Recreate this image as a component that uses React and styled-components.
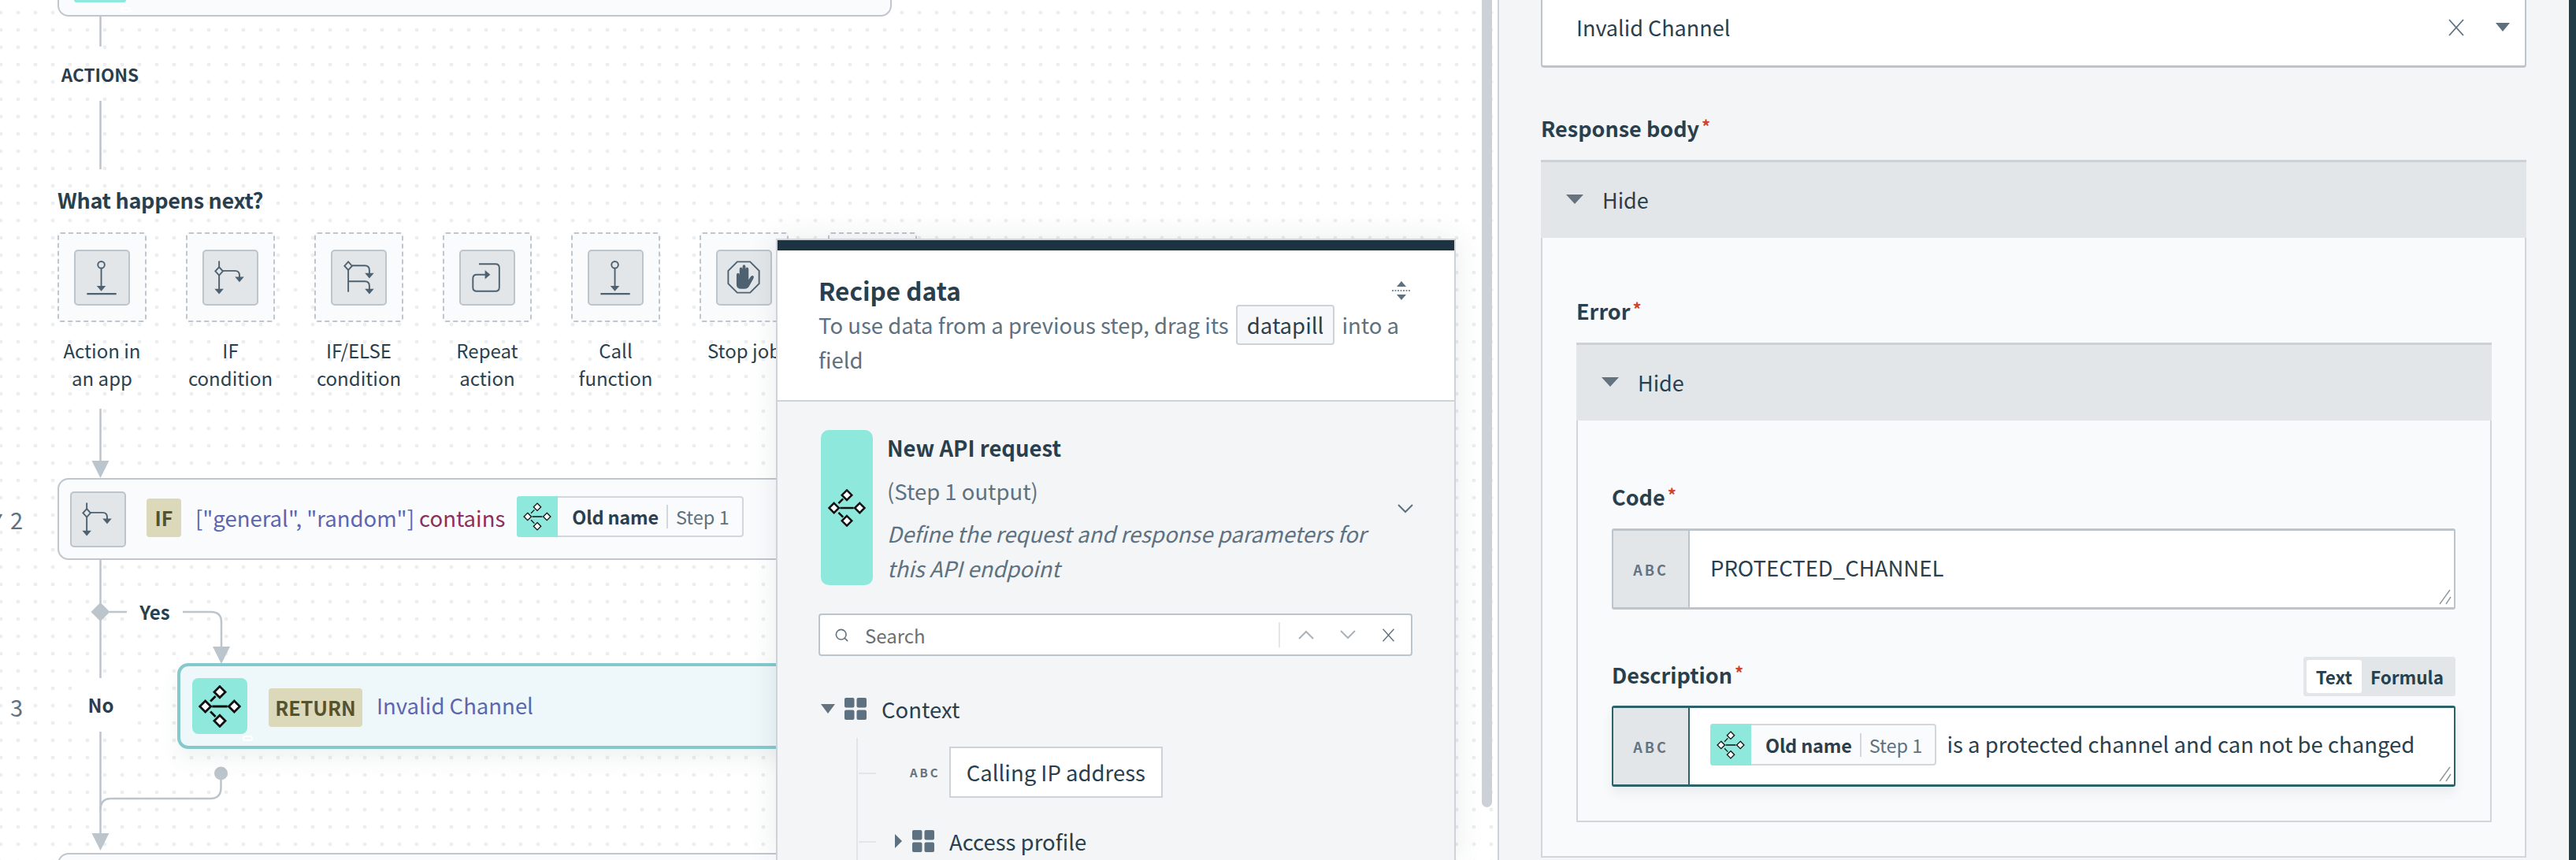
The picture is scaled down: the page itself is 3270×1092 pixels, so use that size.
import React from 'react'
import styled, { createGlobalStyle } from 'styled-components'
import { Search } from 'lucide-react'

const GlobalStyle = createGlobalStyle`
  html, body {
    margin: 0;
    padding: 0;
    background: #fff;
    overflow: hidden;
  }
  * {
    box-sizing: border-box;
  }
  body {
    font-family: "Noto Sans CJK SC", "Open Sans", sans-serif;
    color: #2a3f4d;
  }
`

const Page = styled.div`
  width: 3270px;
  height: 1092px;
  display: flex;
  overflow: hidden;
`

/* left side: the recipe canvas */
const Canvas = styled.div`
  position: relative;
  width: 1901px;
  height: 1092px;
  flex: none;
  overflow: hidden;
  background-color: #fff;
  background-image: radial-gradient(circle, #eceef0 2.2px, transparent 2.7px);
  background-size: 22px 22px;
  background-position: -10px 5px;
`

const Wires = styled.svg`
  position: absolute;
  left: 0;
  top: 0;
`

const Flow = styled.div`
  position: relative;
  display: flex;
  flex-direction: column;
  padding-left: 73px;
`

const Port = styled.span`
  position: absolute;
  width: 13px;
  height: 7px;
  border: 2px solid #fff;
  border-radius: 4px;
`

const TopCard = styled.div`
  position: relative;
  width: 1059px;
  height: 21px;
  background: #fafbfd;
  border: 2px solid #bfc6ce;
  border-top: none;
  border-radius: 0 0 14px 14px;
  padding-left: 19px;
  ${Port} {
    left: 78px;
    top: 9px;
  }
`

const TopChip = styled.div`
  width: 66px;
  height: 3px;
  background: #8ee8dc;
  border-radius: 0 0 6px 6px;
`

const ActionsLabel = styled.div`
  width: 108px;
  margin-top: 58px;
  font-size: 22.5px;
  line-height: 30px;
  font-weight: 600;
  text-align: center;
`

const NextTitle = styled.div`
  margin-top: 130px;
  font-size: 27px;
  line-height: 30px;
  font-weight: 700;
  letter-spacing: -0.3px;
`

const TileRow = styled.div`
  display: flex;
  gap: 50px;
  margin-top: 26px;
  height: 202px;
`

const TileColumn = styled.div`
  width: 113px;
  flex: none;
  display: flex;
  flex-direction: column;
  align-items: center;
`

const Tile = styled.div`
  width: 113px;
  height: 114px;
  display: flex;
  align-items: center;
  justify-content: center;
  background: #fafbfd;
  border: 2px dashed #bfc6ce;
  border-radius: 4px;
`

const IconBox = styled.div`
  width: 71px;
  height: 71px;
  flex: none;
  background: #e3e6e9;
  border: 2px solid #bcc4cc;
  border-radius: 5px;
  display: flex;
  align-items: center;
  justify-content: center;
`

const TileLabel = styled.div`
  width: 140px;
  margin-top: 18px;
  font-size: 24px;
  line-height: 35px;
  text-align: center;
  white-space: pre-line;
`

const StepRow = styled.div`
  display: flex;
  align-items: center;
  margin-left: -73px;
  margin-top: ${({ $top }) => $top}px;
`

const StepNumber = styled.div`
  position: relative;
  width: ${({ $width }) => $width}px;
  flex: none;
  padding-left: 13px;
  font-size: 29px;
  line-height: 36px;
  color: #5e7180;
`

/* sliver of the step menu caret that sticks in from the window edge */
const StepCaret = styled.span`
  position: absolute;
  left: 0;
  top: 12px;
  width: 3px;
  height: 6px;
  background: #5e7180;
  clip-path: polygon(0 0, 100% 0, 0 100%);
`

const IfCard = styled.div`
  width: 1060px;
  height: 104px;
  display: flex;
  align-items: center;
  padding-left: 14px;
  background: #fafbfd;
  border: 2px solid #bfc6ce;
  border-radius: 14px;
`

const Tag = styled.div`
  height: 49px;
  width: ${({ $width }) => $width}px;
  margin-left: ${({ $left }) => $left}px;
  margin-top: ${({ $shift }) => $shift}px;
  flex: none;
  background: #dcd9bb;
  color: #55532d;
  border-radius: 4px;
  font-size: 25px;
  line-height: 49px;
  font-weight: 700;
  text-align: center;
`

const ValueText = styled.span`
  margin-left: 18px;
  margin-top: -4px;
  font-size: 27.5px;
  line-height: 40px;
  color: #5c66b0;
  white-space: pre;
`

const KeywordText = styled.span`
  color: #8d2f5c;
`

const Pill = styled.div`
  height: ${({ $height }) => $height}px;
  flex: none;
  display: flex;
  align-items: center;
  margin-left: ${({ $left }) => $left}px;
  margin-top: ${({ $shift }) => $shift || 0}px;
  background: #fafbfd;
  border: 2px solid #d2d7dc;
  border-radius: 4px;
`

const PillIcon = styled.div`
  width: ${({ $width }) => $width}px;
  align-self: stretch;
  margin: -2px 0 -2px -2px;
  background: #8ee8dc;
  border-radius: 4px 0 0 4px;
  display: flex;
  align-items: center;
  justify-content: center;
`

const PillName = styled.span`
  margin-left: ${({ $left }) => $left}px;
  font-size: 23.5px;
  line-height: 30px;
  font-weight: 700;
  letter-spacing: -0.2px;
`

const PillStep = styled.span`
  margin-left: 10px;
  padding-left: 10px;
  padding-right: 16px;
  border-left: 2px solid #d2d7dc;
  font-size: 23.5px;
  line-height: 30px;
  color: #5e7180;
`

const ReturnCard = styled.div`
  position: relative;
  width: 1000px;
  height: 109px;
  display: flex;
  align-items: center;
  padding-left: 15px;
  background: #eef7f9;
  border: 4px solid #85c9cc;
  border-radius: 14px;
  box-shadow: 0 14px 26px rgba(60, 80, 90, 0.07);
  ${Port} {
    left: 79px;
    bottom: 6px;
  }
`

const FlowIconBox = styled.div`
  width: 70px;
  height: 71px;
  flex: none;
  background: #8ee8dc;
  border-radius: 8px;
  display: flex;
  align-items: center;
  justify-content: center;
`

const BottomCard = styled.div`
  width: 1060px;
  height: 30px;
  margin-top: 132px;
  background: #fafbfd;
  border: 2px solid #bfc6ce;
  border-radius: 14px 14px 0 0;
`

const BranchLabel = styled.div`
  position: absolute;
  background: #fff;
  font-weight: 700;
  font-size: 24px;
  text-align: center;
`

const YesLabel = styled(BranchLabel)`
  left: 161px;
  top: 761px;
  width: 71px;
  height: 32px;
  line-height: 32px;
`

const NoLabel = styled(BranchLabel)`
  left: 98px;
  top: 861px;
  width: 60px;
  height: 68px;
  line-height: 68px;
`

const Scrollbar = styled.div`
  position: absolute;
  left: 1881px;
  top: 0;
  width: 13px;
  height: 1025px;
  background: #ccd1d8;
  border-radius: 0 0 7px 7px;
`

/* floating recipe data panel */
const DataPanel = styled.div`
  position: absolute;
  left: 985px;
  top: 303px;
  width: 863px;
  height: 789px;
  background: #f3f5f7;
  border: 2px solid #ced3d9;
  border-bottom: none;
  box-shadow: 0 0 34px rgba(40, 55, 65, 0.1);
  overflow: hidden;
`

const PanelBar = styled.div`
  height: 13px;
  background: #1e3341;
`

const PanelHeader = styled.div`
  height: 192px;
  background: #fff;
  border-bottom: 2px solid #ced3d9;
  padding: 29px 54px 0 52px;
`

const TitleRow = styled.div`
  display: flex;
  justify-content: space-between;
  align-items: center;
`

const PanelTitle = styled.div`
  font-size: 31.5px;
  line-height: 43px;
  font-weight: 700;
`

const PanelDesc = styled.div`
  font-size: 27.5px;
  line-height: 44px;
  color: #5e7180;
`

const Chip = styled.span`
  display: inline-block;
  margin: -6px 3px -6px 3px;
  padding: 0 12px;
  line-height: 47px;
  color: #2a3f4d;
  background: #f6f7f9;
  border: 2px solid #ced3d9;
  border-radius: 4px;
`

const PanelBody = styled.div`
  padding: 36px 53px 0 52px;
`

const StepSummary = styled.div`
  display: flex;
  align-items: center;
  height: 197px;
`

const StepBlock = styled.div`
  width: 66px;
  align-self: stretch;
  margin-left: 3px;
  flex: none;
  background: #8ee8dc;
  border-radius: 10px;
  display: flex;
  align-items: center;
  justify-content: center;
`

const StepText = styled.div`
  flex: 1;
  margin-left: 18px;
  align-self: flex-start;
  font-size: 27.5px;
`

const StepName = styled.div`
  font-weight: 700;
  line-height: 44px;
`

const StepOutput = styled.div`
  margin-top: 11px;
  line-height: 44px;
  color: #5e7180;
`

const StepHint = styled.div`
  margin-top: 10px;
  line-height: 44px;
  color: #5e7180;
  font-style: italic;
  width: 640px;
`

const StepChevron = styled.svg`
  margin-right: -1px;
  margin-top: 2px;
`

const SearchBox = styled.div`
  margin-top: 36px;
  height: 54px;
  display: flex;
  align-items: center;
  background: #fff;
  border: 2px solid #bcc4cc;
  border-radius: 4px;
  padding-left: 18px;
  color: #5e7180;
`

const SearchText = styled.span`
  flex: 1;
  margin-left: 20px;
  font-size: 24px;
  color: #6b6f73;
`

const SearchTools = styled.div`
  height: 32px;
  width: 168px;
  display: flex;
  align-items: center;
  justify-content: space-around;
  padding: 0 4px 0 6px;
  border-left: 2px solid #e3e6e9;
`

const Tree = styled.div`
  position: relative;
  margin-top: 53px;
  padding-left: 3px;
`

const TreeRail = styled.div`
  position: absolute;
  left: 48px;
  top: 51px;
  width: 2px;
  height: 200px;
  background: #e3e6e9;
`

const TreeRow = styled.div`
  position: relative;
  display: flex;
  align-items: center;
  height: ${({ $height }) => $height}px;
  margin-top: ${({ $top }) => $top || 0}px;
  padding-left: ${({ $indent }) => $indent}px;
  font-size: 27.5px;
`

const TreeTick = styled.span`
  position: absolute;
  left: 48px;
  top: 50%;
  width: 22px;
  height: 2px;
  background: #e3e6e9;
`

const TreeName = styled.span`
  display: flex;
  margin-left: ${({ $left }) => $left}px;
`

const TreeCaret = styled.span`
  width: 0;
  height: 0;
  margin-right: 12px;
  border-left: 9px solid transparent;
  border-right: 9px solid transparent;
  border-top: 12px solid #64737f;
`

const FieldChip = styled.div`
  margin-left: 11px;
  height: 65px;
  padding: 0 20px;
  line-height: 60px;
  background: #fff;
  border: 2px solid #ced3d9;
`

const AbcMark = styled.span`
  font-size: ${({ $size }) => $size}px;
  font-weight: 700;
  letter-spacing: 3px;
  color: #64737f;
`

/* right side: the form */
const FormPanel = styled.div`
  flex: 1;
  height: 1092px;
  background: #f3f5f7;
  border-left: 2px solid #ced3d9;
  padding: 0 54px 0 53px;
  overflow: hidden;
`

const EdgeStrip = styled.div`
  width: 9px;
  height: 1092px;
  flex: none;
  background: #1e3d49;
`

const SelectBox = styled.div`
  height: 86px;
  display: flex;
  align-items: center;
  padding: 0 19px 14px 43px;
  background: #fff;
  border: 2px solid #bcc4cc;
  border-top: none;
  border-bottom-width: 3px;
  border-radius: 0 0 4px 4px;
  font-size: 27px;
  color: #2a3f4d;
`

const SelectValue = styled.span`
  flex: 1;
`

const SelectArrow = styled.span`
  margin-left: 39px;
  width: 0;
  height: 0;
  border-left: 9px solid transparent;
  border-right: 9px solid transparent;
  border-top: 11px solid #5e7180;
`

const FieldLabel = styled.div`
  margin-top: ${({ $top }) => $top}px;
  font-size: 27px;
  line-height: 30px;
  font-weight: 600;
  color: #293f4c;
`

const Required = styled.span`
  margin-left: 3px;
  font-size: 22px;
  line-height: 20px;
  vertical-align: 5px;
  color: #d0432b;
`

const Accordion = styled.div`
  margin-top: 25px;
  border-left: 2px solid #d2d6db;
  border-right: 2px solid #d2d6db;
  border-bottom: 2px solid #d2d6db;
  background: #f9fafc;
`

const AccordionHead = styled.div`
  height: 99px;
  display: flex;
  align-items: center;
  padding: 0 0 2px 32px;
  background: #e3e6e9;
  border-top: 3px solid #ccd1d6;
  margin: 0 -2px;
  font-size: 27px;
`

const HeadArrow = styled.span`
  width: 0;
  height: 0;
  margin-right: 24px;
  border-left: 11px solid transparent;
  border-right: 11px solid transparent;
  border-top: 12px solid #64737f;
`

const AccordionBody = styled.div`
  padding: ${({ $top }) => $top}px ${({ $right }) => $right}px 43px 43px;
`

const LabelRow = styled.div`
  margin-top: 60px;
  height: 50px;
  display: flex;
  align-items: flex-start;
  justify-content: space-between;
`

const Toggle = styled.div`
  height: 50px;
  display: flex;
  align-items: center;
  padding: 0 4px;
  background: #e3e6e9;
  border-radius: 3px;
  font-size: 22.5px;
  font-weight: 600;
`

const ToggleOption = styled.div`
  height: 42px;
  line-height: 42px;
  padding: 0 ${({ $active }) => ($active ? 12 : 11)}px;
  border-radius: 3px;
  background: ${({ $active }) => ($active ? '#fff' : 'transparent')};
`

const TextField = styled.div`
  position: relative;
  display: flex;
  height: 103px;
  margin-top: ${({ $top }) => $top}px;
  background: #fff;
  border: 2px solid ${({ $focus }) => ($focus ? '#2c6268' : '#bcc4cc')};
  border-top-width: 3px;
  border-bottom-width: 3px;
  border-radius: 3px;
  box-shadow: ${({ $focus }) => ($focus ? '0 8px 14px rgba(50, 70, 80, 0.08)' : 'none')};
`

const AbcCell = styled.div`
  width: 97px;
  flex: none;
  display: flex;
  align-items: center;
  justify-content: center;
  background: #e3e6e9;
  border-right: 2px solid ${({ $focus }) => ($focus ? '#2c6268' : '#bcc4cc')};
`

const FieldValue = styled.div`
  flex: 1;
  display: flex;
  align-items: flex-start;
  padding: ${({ $top }) => $top}px 0 0 26px;
  font-size: 27.5px;
  line-height: 40px;
  white-space: nowrap;
`

const ResizeGrip = styled.svg`
  position: absolute;
  right: 3px;
  bottom: 3px;
`

const AfterPill = styled.span`
  margin-left: 13px;
  margin-top: 5px;
`

const ic = '#4d6170'

function ActionIcon() {
  return (
    <svg width="67" height="67" viewBox="0 0 70 70" fill="none" stroke={ic} strokeWidth="2">
      <circle cx="34" cy="18" r="4.5" />
      <path d="M34 23V48" />
      <path d="M28 46H40L34 53Z" fill={ic} stroke="none" />
      <path d="M15 56.5H54" strokeWidth="2.4" />
    </svg>
  )
}

function IfIcon() {
  return (
    <svg width="67" height="67" viewBox="0 0 70 70" fill="none" stroke={ic} strokeWidth="2">
      <path d="M20 13V52" />
      <path d="M20 21L25 26.500L20 32L15 26.500Z" fill="#e3e6e9" />
      <path d="M25 26H41Q47 26 47 32V36" />
      <path d="M41 34H53L47 41Z" fill={ic} stroke="none" />
      <path d="M14 50H26L20 57Z" fill={ic} stroke="none" />
    </svg>
  )
}

function IfElseIcon() {
  return (
    <svg width="67" height="67" viewBox="0 0 70 70" fill="none" stroke={ic} strokeWidth="2">
      <path d="M21 20V54" />
      <path d="M21 14L26 19.500L21 25L16 19.500Z" fill="#e3e6e9" />
      <path d="M26 19H43Q49 19 49 25V30" />
      <path d="M21 40H43Q49 40 49 46V51" />
      <path d="M43 29H55L49 36Z" fill={ic} stroke="none" />
      <path d="M43 50H55L49 57Z" fill={ic} stroke="none" />
    </svg>
  )
}

function RepeatIcon() {
  return (
    <svg width="67" height="67" viewBox="0 0 70 70" fill="none" stroke={ic} strokeWidth="2">
      <path d="M24 17H46Q51 17 51 22V48Q51 53 46 53H21Q16 53 16 48V36Q16 31 21 31H33" />
      <path d="M32 25L39 31L32 37Z" fill={ic} stroke="none" />
    </svg>
  )
}

function StopIcon() {
  return (
    <svg width="67" height="67" viewBox="0 0 70 70" fill="none" stroke={ic} strokeWidth="2">
      <path d="M26 14H43L55 26V43L43 55H26L14 43V26Z" />
      <path
        d="M25 32Q25 29 27 29Q29 29 29 32V24Q29 21.500 31 21.500Q33 21.500 33 24V20.500Q33 18 35 18Q37 18 37 20.500V24Q37 21.500 39 21.500Q41 21.500 41 24V38L44 33.500Q46 31.500 47.500 33Q48.500 34 47.500 36L42 46Q40 50 36 50H31Q25 50 25 44Z"
        fill={ic}
        stroke="none"
      />
    </svg>
  )
}

function FlowIcon({ size, weight = 2.6 }) {
  const diamond = (x, y) => `M${x} ${y - 6.500}L${x + 6.500} ${y}L${x} ${y + 6.500}L${x - 6.500} ${y}Z`
  return (
    <svg width={size} height={size} viewBox="0 0 50 50" fill="#fff" stroke="#111" strokeWidth={weight}>
      <path d={diamond(8, 25)} />
      <path d={diamond(42, 25)} />
      <path d={diamond(25, 8)} />
      <path d={diamond(25, 42)} />
      <path d="M16 25H34M14 19L20 13M14 31L20 37" fill="none" />
    </svg>
  )
}

function ThinX({ size, color }) {
  return (
    <svg width={size} height={size} viewBox="0 0 22 22" fill="none" stroke={color} strokeWidth="1.800">
      <path d="M2 1L20 21M20 1L2 21" />
    </svg>
  )
}

function Chevron({ up, color }) {
  return (
    <svg width="20" height="12" viewBox="0 0 20 12" fill="none" stroke={color} strokeWidth="2">
      <path d={up ? 'M1 11L10 2L19 11' : 'M1 1L10 10L19 1'} />
    </svg>
  )
}

function Connectors() {
  const line = '#bcc4cc'
  const arrow = (x, tip) => `M${x - 11} ${tip - 22}H${x + 11}L${x} ${tip}Z`
  return (
    <Wires width="1901" height="1092" fill="none" stroke={line} strokeWidth="2.500">
      <path d="M127.500 21V59M127.500 128V215M127.500 519V590" />
      <path d={arrow(127.5, 607)} fill={line} stroke="none" />
      <path d="M127.500 711V861M127.500 929V1062" />
      <path d="M127.500 765L139.500 777L127.500 789L115.500 777Z" fill={line} stroke="none" />
      <path d="M139 777H162M232 777H268Q281 777 281 790V825" />
      <path d={arrow(281, 843)} fill={line} stroke="none" />
      <circle cx="280.500" cy="982" r="8.500" fill={line} stroke="none" />
      <path d="M280.500 982V1000Q280.500 1014 267 1014H141Q127.500 1014 127.500 1028" />
      <path d={arrow(127.5, 1080)} fill={line} stroke="none" />
    </Wires>
  )
}

const tiles = [
  { label: 'Action in\nan app', icon: <ActionIcon /> },
  { label: 'IF\ncondition', icon: <IfIcon /> },
  { label: 'IF/ELSE\ncondition', icon: <IfElseIcon /> },
  { label: 'Repeat\naction', icon: <RepeatIcon /> },
  { label: 'Call\nfunction', icon: <ActionIcon /> },
  { label: 'Stop job', icon: <StopIcon /> },
  { label: '', icon: null },
]

function RecipeCanvas() {
  return (
    <Canvas>
      <Connectors />
      <Flow>
        <TopCard>
          <TopChip />
          <Port />
        </TopCard>
        <ActionsLabel>ACTIONS</ActionsLabel>
        <NextTitle>What happens next?</NextTitle>
        <TileRow>
          {tiles.map((t, i) => (
            <TileColumn key={i}>
              <Tile>{t.icon && <IconBox>{t.icon}</IconBox>}</Tile>
              <TileLabel>{t.label}</TileLabel>
            </TileColumn>
          ))}
        </TileRow>
        <StepRow $top={110}>
          <StepNumber $width={73}>
            <StepCaret />2
          </StepNumber>
          <IfCard>
            <IconBox>
              <IfIcon />
            </IconBox>
            <Tag $width={44} $left={26} $shift={-3}>IF</Tag>
            <ValueText>
              ["general", "random"] <KeywordText>contains</KeywordText>
            </ValueText>
            <Pill $height={52} $left={15} $shift={-6}>
              <PillIcon $width={52}>
                <FlowIcon size={36} weight={1.8} />
              </PillIcon>
              <PillName $left={18}>Old name</PillName>
              <PillStep>Step 1</PillStep>
            </Pill>
          </IfCard>
        </StepRow>
        <StepRow $top={131}>
          <StepNumber $width={225}>3</StepNumber>
          <ReturnCard>
            <FlowIconBox>
              <FlowIcon size={54} />
            </FlowIconBox>
            <Tag $width={119} $left={27} $shift={3}>RETURN</Tag>
            <ValueText>Invalid Channel</ValueText>
            <Port />
          </ReturnCard>
        </StepRow>
        <BottomCard />
      </Flow>
      <YesLabel>Yes</YesLabel>
      <NoLabel>No</NoLabel>
      <Scrollbar />
      <RecipeData />
    </Canvas>
  )
}

function GridIcon({ size }) {
  return (
    <svg width={size} height={size} viewBox="0 0 28 28" fill="#5e7180">
      <rect x="0" y="0" width="12.500" height="12.500" rx="2" />
      <rect x="15.500" y="0" width="12.500" height="12.500" rx="2" />
      <rect x="0" y="15.500" width="12.500" height="12.500" rx="2" />
      <rect x="15.500" y="15.500" width="12.500" height="12.500" rx="2" />
    </svg>
  )
}

function RecipeData() {
  return (
    <DataPanel>
      <PanelBar />
      <PanelHeader>
        <TitleRow>
          <PanelTitle>Recipe data</PanelTitle>
          <svg width="26" height="26" viewBox="0 0 26 26" fill="#5e7180">
            <path d="M13 1L19 8H7Z" />
            <path d="M13 25L19 18H7Z" />
            <path d="M1 13H25" stroke="#5e7180" strokeWidth="1.600" strokeDasharray="2 1.500" />
          </svg>
        </TitleRow>
        <PanelDesc>
          To use data from a previous step, drag its <Chip>datapill</Chip> into a field
        </PanelDesc>
      </PanelHeader>
      <PanelBody>
        <StepSummary>
          <StepBlock>
            <FlowIcon size={48} />
          </StepBlock>
          <StepText>
            <StepName>New API request</StepName>
            <StepOutput>(Step 1 output)</StepOutput>
            <StepHint>Define the request and response parameters for this API endpoint</StepHint>
          </StepText>
          <StepChevron width="20" height="12" viewBox="0 0 20 12" fill="none" stroke="#5e7180" strokeWidth="2">
            <path d="M1 1L10 10L19 1" />
          </StepChevron>
        </StepSummary>
        <SearchBox>
          <Search size={19} strokeWidth={2} />
          <SearchText>Search</SearchText>
          <SearchTools>
            <Chevron up color="#aab3bb" />
            <Chevron color="#aab3bb" />
            <ThinX size={17} color="#5e7180" />
          </SearchTools>
        </SearchBox>
        <Tree>
          <TreeRail />
          <TreeRow $height={28} $indent={0}>
            <TreeCaret />
            <GridIcon size={28} />
            <TreeName $left={19}>Context</TreeName>
          </TreeRow>
          <TreeRow $height={65} $top={34} $indent={113}>
            <TreeTick />
            <AbcMark $size={15}>ABC</AbcMark>
            <FieldChip>Calling IP address</FieldChip>
          </TreeRow>
          <TreeRow $height={28} $top={41} $indent={93}>
            <TreeTick />
            <svg width="12" height="18" viewBox="0 0 12 18" fill="#5e7180">
              <path d="M1 0L10 9L1 18Z" />
            </svg>
            <TreeName $left={11}>
              <GridIcon size={28} />
            </TreeName>
            <TreeName $left={19}>Access profile</TreeName>
          </TreeRow>
        </Tree>
      </PanelBody>
    </DataPanel>
  )
}

function Grip() {
  return (
    <ResizeGrip width="16" height="20" viewBox="0 0 16 20" fill="none" stroke="#8d949b" strokeWidth="1.400">
      <path d="M1 19L14 1M9 19L15 10" />
    </ResizeGrip>
  )
}

function ResponseForm() {
  return (
    <FormPanel>
      <SelectBox>
        <SelectValue>Invalid Channel</SelectValue>
        <ThinX size={22} color="#5e7180" />
        <SelectArrow />
      </SelectBox>
      <FieldLabel $top={62}>
        Response body<Required>*</Required>
      </FieldLabel>
      <Accordion>
        <AccordionHead>
          <HeadArrow />
          Hide
        </AccordionHead>
        <AccordionBody $top={78} $right={42}>
          <FieldLabel $top={0}>
            Error<Required>*</Required>
          </FieldLabel>
          <Accordion>
            <AccordionHead>
              <HeadArrow />
              Hide
            </AccordionHead>
            <AccordionBody $top={82} $right={44}>
              <FieldLabel $top={0}>
                Code<Required>*</Required>
              </FieldLabel>
              <TextField $top={25}>
                <AbcCell>
                  <AbcMark $size={18}>ABC</AbcMark>
                </AbcCell>
                <FieldValue $top={26}>PROTECTED_CHANNEL</FieldValue>
                <Grip />
              </TextField>
              <LabelRow>
                <FieldLabel $top={8}>
                  Description<Required>*</Required>
                </FieldLabel>
                <Toggle>
                  <ToggleOption $active>Text</ToggleOption>
                  <ToggleOption>Formula</ToggleOption>
                </Toggle>
              </LabelRow>
              <TextField $top={12} $focus>
                <AbcCell $focus>
                  <AbcMark $size={18}>ABC</AbcMark>
                </AbcCell>
                <FieldValue $top={20}>
                  <Pill $height={53} $left={0}>
                    <PillIcon $width={52}>
                      <FlowIcon size={36} weight={1.8} />
                    </PillIcon>
                    <PillName $left={18}>Old name</PillName>
                    <PillStep>Step 1</PillStep>
                  </Pill>
                  <AfterPill>is a protected channel and can not be changed</AfterPill>
                </FieldValue>
                <Grip />
              </TextField>
            </AccordionBody>
          </Accordion>
        </AccordionBody>
      </Accordion>
    </FormPanel>
  )
}

export default function App() {
  return (
    <>
      <GlobalStyle />
      <Page>
        <RecipeCanvas />
        <ResponseForm />
        <EdgeStrip />
      </Page>
    </>
  )
}
